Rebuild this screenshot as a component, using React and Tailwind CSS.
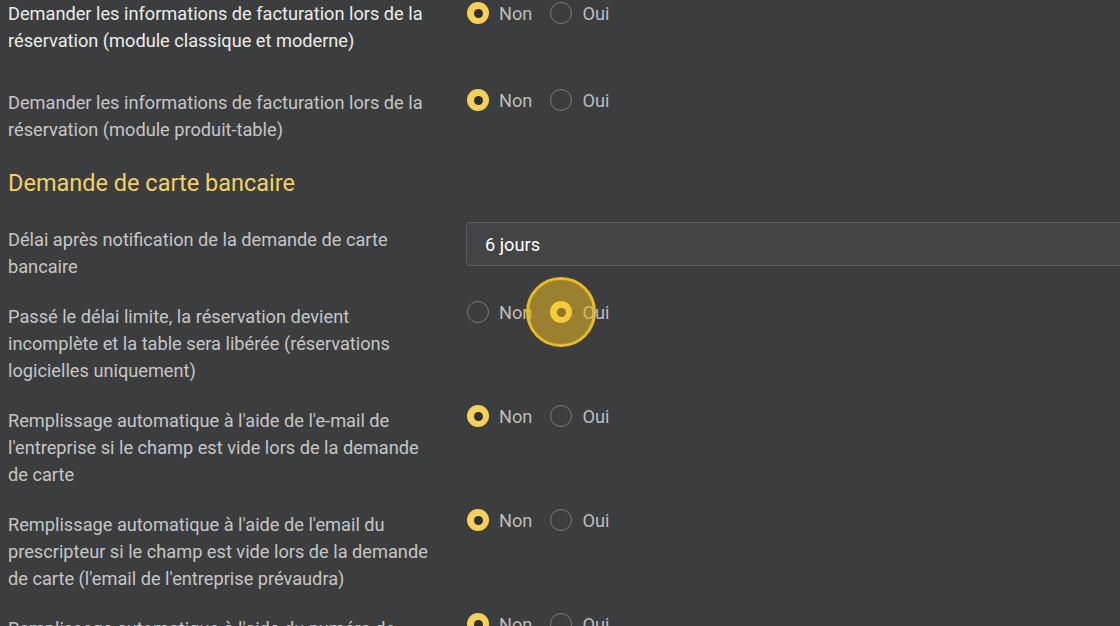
import React from 'react';

const rows = [
    { label: 'Demander les informations de facturation lors de la réservation (module classique et moderne)', value: 'non', bright: true, mb: 'mb-[35px]' },
    { label: 'Demander les informations de facturation lors de la réservation (module produit-table)', value: 'non', mb: 'mb-[25px]', shift: 'pt-0' },
];

const cardRows = [
    { label: 'Passé le délai limite, la réservation devient incomplète et la table sera libérée (réservations logicielles uniquement)', value: 'oui', focus: true },
    { label: "Remplissage automatique à l'aide de l'e-mail de l'entreprise si le champ est vide lors de la demande de carte", value: 'non' },
    { label: "Remplissage automatique à l'aide de l'email du prescripteur si le champ est vide lors de la demande de carte (l'email de l'entreprise prévaudra)", value: 'non' },
    { label: "Remplissage automatique à l'aide du numéro de téléphone de l'entreprise si le champ est vide lors de la demande de carte", value: 'non' },
];

function Radio({ checked, focus }) {
    if (focus) {
        return (
            <div className="relative w-[22px] h-[22px] shrink-0">
                <div className="absolute left-1/2 top-1/2 -translate-x-1/2 -translate-y-1/2 w-[70px] h-[70px] rounded-full border-[3px] border-[#e9ba22] bg-[#e9ba22]/55 z-10"></div>
                <div className="absolute inset-0 rounded-full bg-[#f4c93a] flex items-center justify-center z-20">
                    <div className="w-[9px] h-[9px] rounded-full bg-[#8e7528]"></div>
                </div>
            </div>
        );
    }
    if (checked) {
        return (
            <div className="w-[22px] h-[22px] shrink-0 rounded-full bg-[#f5d15a] flex items-center justify-center">
                <div className="w-[9px] h-[9px] rounded-full bg-[#303030]"></div>
            </div>
        );
    }
    return <div className="w-[22px] h-[22px] shrink-0 rounded-full border border-[#7a7b7d]"></div>;
}

function YesNo({ value, focus }) {
    return (
        <div className="flex items-center h-[22px] ml-[1px]">
            <Radio checked={value === 'non'} />
            <span className="ml-[10px] text-[#bcbcbc]">Non</span>
            <div className="ml-[18px]">
                <Radio checked={value === 'oui'} focus={focus} />
            </div>
            <span className="ml-[10px] text-[#bcbcbc]">Oui</span>
        </div>
    );
}

function Row({ label, value, bright, focus, className, shift }) {
    return (
        <div className={`flex items-start ${className || ''}`}>
            <p className={`w-[432px] shrink-0 ${bright ? 'text-[#ececec]' : 'text-[#c6c6c6]'}`}>{label}</p>
            <div className={`ml-[26px] ${shift || 'pt-[2px]'}`}>
                <YesNo value={value} focus={focus} />
            </div>
        </div>
    );
}

export default function App() {
    return (
        <div className="w-[1120px] h-[626px] overflow-hidden bg-[#3c3d3f] pl-2 text-[18.2px] leading-[27px]" style={{ fontFamily: 'Roboto, "Liberation Sans", sans-serif' }}>
            {rows.map((r, i) => (
                <Row key={i} {...r} className={r.mb} />
            ))}

            <h2 className="text-[23.5px] leading-[30px] text-[#f3d162] mb-[24px]">Demande de carte bancaire</h2>

            <div className="flex items-start mb-[23px]">
                <p className="w-[432px] shrink-0 text-[#c6c6c6] pt-[4px]">Délai après notification de la demande de carte bancaire</p>
                <div className="ml-[26px] flex-1 h-[44px] rounded-[3px] border border-[#5d5e60] bg-[#434446] flex items-center px-[18px] text-white mr-[-8px]">
                    6 jours
                </div>
            </div>

            <div className="flex flex-col gap-[23px]">
                {cardRows.map((r, i) => (
                    <Row key={i} {...r} shift="-mt-[2px]" />
                ))}
            </div>
        </div>
    );
}
